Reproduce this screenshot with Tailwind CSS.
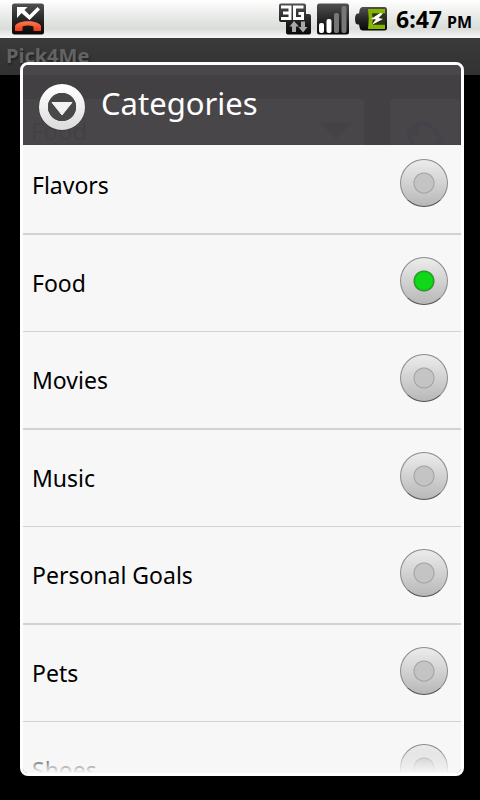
<!DOCTYPE html>
<html lang="en">
<head>
<meta charset="utf-8">
<meta name="viewport" content="width=device-width, initial-scale=1">
<title>Pick4Me</title>
<script src="https://cdn.jsdelivr.net/npm/@tailwindcss/browser@4"></script>
</head>
<body class="bg-black font-['Noto_Sans','Open_Sans',sans-serif] text-black">
<div class="flex h-screen flex-col overflow-hidden">

  <!-- Status bar -->
  <header class="flex h-[38px] shrink-0 items-center bg-linear-to-b from-white via-[#d9dcd8] via-75% to-[#f8f8f8] pr-2 pl-3">
    <svg class="size-8" viewBox="0 0 32 32" role="img" aria-label="Missed call">
      <defs>
        <linearGradient id="tile" x1="0" y1="0" x2="0" y2="1"><stop offset="0" stop-color="#505050"/><stop offset=".6" stop-color="#202020"/><stop offset="1" stop-color="#080808"/></linearGradient>
        <linearGradient id="phone" x1="0" y1="0" x2="0" y2="1"><stop offset="0" stop-color="#ff7a50"/><stop offset="1" stop-color="#f03a14"/></linearGradient>
      </defs>
      <rect width="32" height="31" y="0.500" rx="2.500" fill="url(#tile)"/>
      <path d="M5 4H15.500L12.500 7L17.500 12L25.500 4L28 6.500L17.500 17L9.500 10L5 15Z" fill="#fff"/>
      <path d="M3 28V23C5 16.500 27 16.500 29 23V28H21.500V23.500C18 22.300 14 22.300 10.500 23.500V28Z" fill="url(#phone)"/>
    </svg>
    <div class="ml-auto flex items-center gap-[6px]">
      <svg class="size-8" viewBox="0 0 32 32" role="img" aria-label="3G data">
        <path d="M2 0.500H25Q27 0.500 27 2.500V11H30Q32 11 32 13V29.500Q32 31.500 30 31.500H9Q7 31.500 7 29.500V19H2Q0 19 0 17V2.500Q0 0.500 2 0.500Z" fill="url(#tile)"/>
        <path d="M2 4H11V15.500H2M4 10H11M24.500 4H15.500V15.500H23.500V10.500H19.500" fill="none" stroke="#fff" stroke-width="3"/>
        <path d="M15 18L20 23.500H17V29H13V23.500H10.500ZM22 18.500H26V24H28.500L24 29.500L19.500 24H22Z" fill="#a8a8a8"/>
      </svg>
      <svg class="size-8" viewBox="0 0 32 32" role="img" aria-label="Signal strength">
        <rect width="32" height="31" y="0.500" rx="2.500" fill="url(#tile)"/>
        <rect x="2" y="20" width="5" height="10" rx="2" fill="#fff"/>
        <rect x="9.500" y="16" width="5" height="14" rx="2" fill="#fff"/>
        <rect x="17" y="10" width="5" height="20" rx="2" fill="#777"/>
        <rect x="24.500" y="3" width="5" height="27" rx="2" fill="#777"/>
      </svg>
      <svg class="size-8" viewBox="0 0 32 32" role="img" aria-label="Battery charging">
        <path d="M8 4H29.500Q32 4 32 6.500V25Q32 27.500 29.500 27.500H8Q5 27.500 4.500 24L4 21.500H2.500Q0 21 0 16T2.500 10.500H4L4.500 7.500Q5 4 8 4Z" fill="url(#tile)"/>
        <path d="M13 6H30V10.500H17Q19 16 17 21.500H30V26H13Q14.500 16 13 6Z" fill="#86b500"/>
        <path d="M17 10.500H30V21.500H17Q19 16 17 10.500Z" fill="#2c3418"/>
        <path d="M25 10L16 16L21 16.500L16.500 22L28 16L23.500 15L28 10.500Z" fill="#fff"/>
      </svg>
      <p class="ml-[3px] text-[23px] leading-8 font-bold whitespace-nowrap">6:47 <span class="-ml-px text-base">PM</span></p>
    </div>
  </header>

  <div class="relative min-h-0 flex-1">
    <!-- Screen behind the dialog -->
    <div inert>
      <h1 class="h-[37px] bg-linear-to-b from-[#393a39] to-[#313231] px-[6px] text-xl leading-9 font-bold text-[#636363] [text-shadow:1px_2px_2px_#222]">Pick4Me</h1>
      <div class="mt-6 flex gap-[26px] pr-5 pl-[23px]">
        <button type="button" class="flex h-16 flex-1 items-center justify-between rounded bg-[#282828] px-2 text-2xl text-[#080808]">Food
          <svg class="mr-1 h-4 w-8" viewBox="0 0 32 16"><path d="M0 0H32L16 16Z" fill="#121212"/></svg>
        </button>
        <button type="button" aria-label="Pick" class="flex h-16 w-[70px] items-center justify-center rounded bg-[#282828]">
          <svg class="mt-4 h-12 w-11" viewBox="0 0 48 48" fill="none" stroke="#101430" stroke-width="4"><path d="M6 16L18 6L30 10L42 24V38L28 44L10 30Z M6 16L14 18L18 6M32 34L42 24"/></svg>
        </button>
      </div>
    </div>

    <!-- Dialog -->
    <form role="dialog" aria-labelledby="dlg-title" class="absolute inset-0 mt-6 mr-4 mb-6 ml-5 flex flex-col overflow-hidden rounded-lg border-3 border-white">
      <div class="flex h-20 shrink-0 items-center gap-[15px] bg-[#4d4b4d]/85 px-[15px] pt-1">
        <svg class="size-12" viewBox="0 0 48 48" aria-hidden="true">
          <defs><linearGradient id="ring" x1="0" y1="0" x2="0" y2="1"><stop offset="0" stop-color="#fff"/><stop offset="1" stop-color="#dedede"/></linearGradient></defs>
          <circle cx="24" cy="24.500" r="23.500" fill="#333" opacity=".4"/>
          <circle cx="24" cy="24" r="18.500" fill="none" stroke="url(#ring)" stroke-width="9"/>
          <circle cx="24" cy="24" r="14" fill="#484848"/>
          <path d="M14 19.500H34L24 32Z" fill="#f2f2f2" stroke="#f2f2f2" stroke-width="1" stroke-linejoin="round"/>
        </svg>
        <h2 id="dlg-title" class="-mt-2 text-[31px] leading-10 text-white">Categories</h2>
      </div>
      <div class="relative min-h-0 flex-1 overflow-hidden bg-[#f7f7f7]">
        <div class="-mt-2 text-[23px] leading-8 [&>label]:flex [&>label]:h-[98px] [&>label]:items-center [&>label]:justify-between [&>label]:border-b-2 [&>label]:border-[#d2d2d2] [&>label]:pr-[13px] [&>label]:pb-1 [&>label]:pl-[9px] [&>label:nth-child(even)]:h-[97px] [&>label:nth-child(even)]:border-b [&_span]:mt-1 [&_input]:size-12 [&_input]:appearance-none [&_input]:rounded-full [&_input]:border [&_input]:border-[#8a8a8a] [&_input]:border-b-[#505050] [&_input]:bg-[radial-gradient(circle_at_center,#c4c4c4_9px,#a0a0a0_10px,#a0a0a0_10px,transparent_11px),linear-gradient(#ececec,#b8b8b8)] [&_input:checked]:bg-[radial-gradient(circle_at_center,#10d818_8px,#0cc414_9px,#2c8c2c_10px,transparent_11px),linear-gradient(#ececec,#b8b8b8)]">
          <label><span>Flavors</span><input type="radio" name="category"></label>
          <label><span>Food</span><input type="radio" name="category" checked></label>
          <label><span>Movies</span><input type="radio" name="category"></label>
          <label><span>Music</span><input type="radio" name="category"></label>
          <label><span>Personal Goals</span><input type="radio" name="category"></label>
          <label><span>Pets</span><input type="radio" name="category"></label>
          <label><span>Shoes</span><input type="radio" name="category"></label>
        </div>
        <div class="pointer-events-none absolute inset-x-0 bottom-0 h-6 bg-linear-to-b from-[#f7f7f7]/0 to-[#f7f7f7]"></div>
      </div>
    </form>
  </div>
</div>
</body>
</html>
